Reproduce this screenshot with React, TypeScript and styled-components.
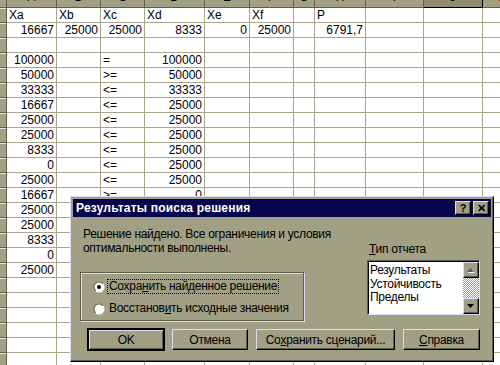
import React from "react";
import styled, {createGlobalStyle, css} from "styled-components";

const FACE = "#a19f84";
const LIGHT = "#dcdcfa";
const SHADOW = "#5f5d4c";
const GRID = "#a8a68c";
const NAVY = "#06064c";

const GlobalStyle = createGlobalStyle`
  html, body {
    margin: 0;
    padding: 0;
    background: #fff;
  }
  body {
    font-family: "Liberation Sans", Arial, sans-serif;
    font-size: 12px;
    overflow: hidden;
  }
`

const COLS = [7, 50, 44, 44, 60, 45, 44, 21, 51, 58, 59, 40];
const LETTERS = ["A", "B", "C", "D", "E", "F", "G", "H", "I", "J", "K"];

type V = string | number | null
// [A, B, C, D, E, F, G, H]
const DATA: V[][] = [
    ["Xa", "Xb", "Xc", "Xd", "Xe", "Xf", null, "P"],
    [16667, 25000, 25000, 8333, 0, 25000, null, "6791,7"],
    [],
    [100000, null, "=", 100000],
    [50000, null, ">=", 50000],
    [33333, null, "<=", 33333],
    [16667, null, "<=", 25000],
    [25000, null, "<=", 25000],
    [25000, null, "<=", 25000],
    [8333, null, "<=", 25000],
    [0, null, "<=", 25000],
    [25000, null, "<=", 25000],
    [16667, null, ">=", 0],
    [25000],
    [25000],
    [8333],
    [0],
    [25000],
];
const ROWS = 25;

const Screen = styled.div`
  position: relative;
  width: 500px;
  height: 365px;
  overflow: hidden;
`
const Sheet = styled.div`
  display: grid;
  grid-template-columns: ${COLS.map(c => c + "px").join(" ")};
  grid-auto-rows: 15px;
  grid-template-rows: 8px;
`
const Corner = styled.div`
  background: ${FACE};
  border-right: 1px solid ${SHADOW};
  border-bottom: 1px solid ${SHADOW};
  box-sizing: border-box;
`
const ColHead = styled.div<{ $selected?: boolean }>`
  box-sizing: border-box;
  background: ${FACE};
  border-right: 1px solid ${SHADOW};
  border-bottom: 1px solid ${SHADOW};
  display: flex;
  align-items: flex-end;
  justify-content: center;
  overflow: hidden;
  color: #000;
  line-height: 14px;
  span {
    margin-bottom: 3px;
  }
  ${p => p.$selected && css`
    background: #8e8c72;
    border-right: 1px solid #000;
    border-bottom: 1px solid #000;
  `}
`
const RowHead = styled.div`
  box-sizing: border-box;
  background: ${FACE};
  border-right: 1px solid ${SHADOW};
  border-bottom: 1px solid ${SHADOW};
  box-shadow: inset 0 1px 0 #e8e8e0;
`
const Cell = styled.div<{ $right?: boolean }>`
  box-sizing: border-box;
  border-right: 1px solid ${GRID};
  border-bottom: 1px solid ${GRID};
  background: #fff;
  line-height: 14px;
  padding: 0 2px;
  white-space: nowrap;
  overflow: visible;
  text-align: ${p => (p.$right ? "right" : "left")};
`

const Dialog = styled.div`
  position: absolute;
  left: 70px;
  top: 196px;
  width: 424px;
  height: 166px;
  box-sizing: border-box;
  background: ${FACE};
  border-top: 1px solid ${LIGHT};
  border-left: 1px solid ${LIGHT};
  border-right: 1px solid #000;
  border-bottom: 1px solid #000;
  box-shadow: inset -1px -1px 0 ${SHADOW};
  padding: 2px;
  display: flex;
  flex-direction: column;
  letter-spacing: -0.3px;
`
const TitleBar = styled.div`
  height: 18px;
  background: ${NAVY};
  display: flex;
  align-items: center;
  justify-content: space-between;
  padding: 0 2px 0 3px;
`
const Title = styled.div`
  color: #fff;
  font-weight: bold;
  font-size: 12px;
  letter-spacing: 0.2px;
`
const CaptionButtons = styled.div`
  display: flex;
  gap: 2px;
`
const bevel = css`
  border-top: 1px solid ${LIGHT};
  border-left: 1px solid ${LIGHT};
  border-right: 1px solid #000;
  border-bottom: 1px solid #000;
  box-shadow: inset -1px -1px 0 ${SHADOW};
`
const CaptionButton = styled.div`
  box-sizing: border-box;
  width: 16px;
  height: 14px;
  background: ${FACE};
  ${bevel};
  display: flex;
  align-items: center;
  justify-content: center;
  font-weight: bold;
  font-size: 11px;
  line-height: 12px;
  letter-spacing: 0;
  color: #000;
`
const Body = styled.div`
  flex: 1;
  display: flex;
  flex-direction: column;
  padding: 10px 11px 0 7px;
`
const TopPart = styled.div`
  display: flex;
  justify-content: space-between;
`
const LeftCol = styled.div`
  display: flex;
  flex-direction: column;
`
const Message = styled.div`
  padding-left: 3px;
  line-height: 14px;
  color: #000;
`
const GroupBox = styled.div`
  margin-top: 17px;
  width: 224px;
  height: 49px;
  box-sizing: border-box;
  border: 1px solid ${SHADOW};
  box-shadow: inset 1px 1px 0 ${LIGHT}, 1px 1px 0 ${LIGHT};
  padding: 7px 0 0 12px;
  display: flex;
  flex-direction: column;
  gap: 9px;
`
const RadioRow = styled.div`
  display: flex;
  align-items: center;
  gap: 3px;
  height: 13px;
`
const RadioLabel = styled.span<{ $focused?: boolean }>`
  line-height: 13px;
  padding: 0 1px;
  outline: ${p => (p.$focused ? "1px dotted #000" : "none")};
  color: #000;
`
const U = styled.span`
  text-decoration: underline;
`
const RightCol = styled.div`
  margin-top: 15px;
  width: 113px;
  display: flex;
  flex-direction: column;
`
const FieldLabel = styled.div`
  padding-left: 2px;
  line-height: 14px;
  color: #000;
`
const ListBox = styled.div`
  margin-top: 4px;
  height: 55px;
  box-sizing: border-box;
  border-top: 1px solid ${SHADOW};
  border-left: 1px solid ${SHADOW};
  border-right: 1px solid ${LIGHT};
  border-bottom: 1px solid ${LIGHT};
  box-shadow: inset 1px 1px 0 #000;
  background: #fff;
  display: flex;
`
const ListItems = styled.div`
  flex: 1;
  padding: 3px 0 0 2px;
  line-height: 13.5px;
  color: #000;
`
const ScrollBar = styled.div`
  width: 16px;
  margin: 1px 0 0 0;
  display: flex;
  flex-direction: column;
`
const ScrollButton = styled.div`
  box-sizing: border-box;
  width: 16px;
  height: 16px;
  background: ${FACE};
  ${bevel};
  display: flex;
  align-items: center;
  justify-content: center;
`
const ScrollTrack = styled.div`
  flex: 1;
  background: repeating-conic-gradient(#fff 0 25%, ${FACE} 0 50%) 0 0 / 2px 2px;
`
const ButtonRow = styled.div`
  margin-top: 8px;
  padding-left: 8px;
  display: flex;
  gap: 8px;
`
const Button = styled.div<{ $w: number; $default?: boolean }>`
  box-sizing: border-box;
  width: ${p => p.$w}px;
  height: 21px;
  background: ${FACE};
  ${bevel};
  display: flex;
  align-items: center;
  justify-content: center;
  color: #000;
  ${p => p.$default && css`
    outline: 1px solid #000;
    outline-offset: 0;
    border-top: 1px solid #000;
    border-left: 1px solid #000;
    box-shadow: inset 1px 1px 0 ${LIGHT}, inset -1px -1px 0 ${SHADOW};
  `}
`

const Radio = ({checked}: { checked?: boolean }) => (
    <svg width="12" height="12" viewBox="0 0 12 12">
        <defs>
            <linearGradient id="rb" x1="0" y1="0" x2="1" y2="1">
                <stop offset="0.5" stopColor={SHADOW}/>
                <stop offset="0.5" stopColor="#fff"/>
            </linearGradient>
        </defs>
        <circle cx="6" cy="6" r="5.5" fill="url(#rb)"/>
        <circle cx="6" cy="6" r="4.5" fill="#fff"/>
        {checked && <circle cx="6" cy="6" r="2" fill="#000"/>}
    </svg>
)

const Arrow = ({down, disabled}: { down?: boolean; disabled?: boolean }) => (
    <svg width="8" height="5" viewBox="0 0 8 5">
        {disabled && <polygon points={down ? "2,1 9,1 5.5,5" : "1,5 8,5 4.5,1"} fill="#fff"/>}
        <polygon points={down ? "0,0 7,0 3.5,4" : "0,4 7,4 3.5,0"} fill={disabled ? SHADOW : "#000"}/>
    </svg>
)

const isNum = (v: V) => typeof v === "number" || (typeof v === "string" && /^[\d,]+$/.test(v))

export default function App() {
    const rows = Array.from({length: ROWS}, (_, r) => DATA[r] || [])
    return (
        <Screen>
            <GlobalStyle/>
            <Sheet>
                <Corner/>
                {LETTERS.map(l => (
                    <ColHead key={l} $selected={l === "J"}><span>{l}</span></ColHead>
                ))}
                {rows.map((row, r) => (
                    <React.Fragment key={r}>
                        <RowHead/>
                        {LETTERS.map((_, c) => {
                            const v = row[c]
                            return (
                                <Cell key={c} $right={v != null && isNum(v)}>
                                    {v != null ? v : ""}
                                </Cell>
                            )
                        })}
                    </React.Fragment>
                ))}
            </Sheet>

            <Dialog>
                <TitleBar>
                    <Title>Результаты поиска решения</Title>
                    <CaptionButtons>
                        <CaptionButton>?</CaptionButton>
                        <CaptionButton>✕</CaptionButton>
                    </CaptionButtons>
                </TitleBar>
                <Body>
                    <TopPart>
                        <LeftCol>
                            <Message>
                                Решение найдено. Все ограничения и условия<br/>
                                оптимальности выполнены.
                            </Message>
                            <GroupBox>
                                <RadioRow>
                                    <Radio checked/>
                                    <RadioLabel $focused>Сохра<U>н</U>ить найденное решение</RadioLabel>
                                </RadioRow>
                                <RadioRow>
                                    <Radio/>
                                    <RadioLabel>Восстанов<U>и</U>ть исходные значения</RadioLabel>
                                </RadioRow>
                            </GroupBox>
                        </LeftCol>
                        <RightCol>
                            <FieldLabel><U>Т</U>ип отчета</FieldLabel>
                            <ListBox>
                                <ListItems>
                                    <div>Результаты</div>
                                    <div>Устойчивость</div>
                                    <div>Пределы</div>
                                </ListItems>
                                <ScrollBar>
                                    <ScrollButton><Arrow disabled/></ScrollButton>
                                    <ScrollTrack/>
                                    <ScrollButton><Arrow down/></ScrollButton>
                                </ScrollBar>
                            </ListBox>
                        </RightCol>
                    </TopPart>
                    <ButtonRow>
                        <Button $w={76} $default>OK</Button>
                        <Button $w={76}>Отмена</Button>
                        <Button $w={139}>Со<U>х</U>ранить сценарий...</Button>
                        <Button $w={77}><U>С</U>правка</Button>
                    </ButtonRow>
                </Body>
            </Dialog>
        </Screen>
    )
}
